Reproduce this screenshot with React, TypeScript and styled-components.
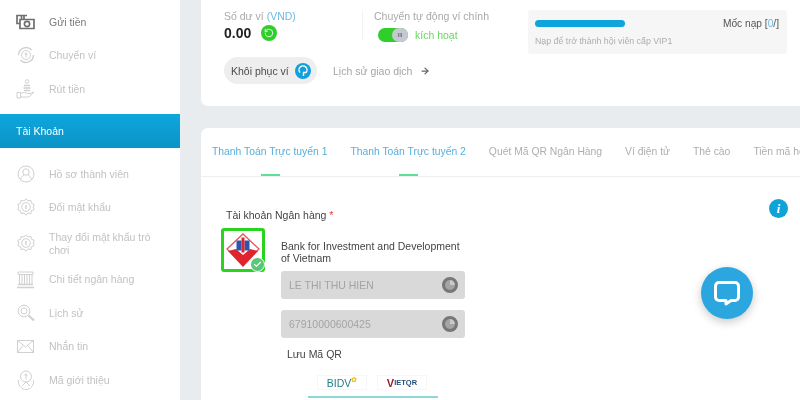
import React from 'react';
import styled, { createGlobalStyle } from 'styled-components';
import { ArrowRight, Check, RotateCcw } from 'lucide-react';

const GlobalStyle = createGlobalStyle`
  html, body {
    margin: 0;
    padding: 0;
    width: 800px;
    height: 400px;
    overflow: hidden;
    background: #e9ecef;
    font-family: 'Liberation Sans', Arial, sans-serif;
  }
`;

const Page = styled.div`
  position: relative;
  display: flex;
  width: 800px;
  height: 400px;
  overflow: hidden;
  background: #e9ecef;
  filter: blur(0.5px);
`;

const Sidebar = styled.aside`
  display: flex;
  flex-direction: column;
  flex: 0 0 180px;
  padding-top: 5px;
  background: #fff;
`;

const NavItem = styled.div<{ $tall?: boolean }>`
  display: flex;
  align-items: center;
  flex: 0 0 ${(p) => (p.$tall ? 38.5 : 33.6)}px;
  padding-left: 16px;
  gap: 14px;
  font-size: 10.5px;
  line-height: 13px;
`;

const NavIcon = styled.span<{ $dark?: boolean }>`
  display: flex;
  flex: 0 0 19px;
  justify-content: center;
  color: ${(p) => (p.$dark ? '#6f6f6f' : '#d0d0d0')};
`;

const NavLabel = styled.span<{ $dark?: boolean }>`
  width: 108px;
  padding-top: 1px;
  color: ${(p) => (p.$dark ? '#7a7a7a' : '#c2c2c2')};
`;

const SectionBand = styled.div`
  display: flex;
  align-items: center;
  height: 34px;
  margin: 8px 0 9px;
  padding-left: 16px;
  background: linear-gradient(#0ea7dd, #0b93c6);
  color: #fff;
  font-size: 10.5px;
`;

const Main = styled.main`
  display: flex;
  flex: 1;
  flex-direction: column;
  min-width: 0;
  padding-left: 21px;
`;

const WalletCard = styled.section`
  display: flex;
  flex: 0 0 106px;
  box-sizing: border-box;
  padding: 10px 13px 0 23px;
  background: #fff;
  border-bottom-left-radius: 7px;
`;

const WalletLeft = styled.div`
  display: flex;
  flex-direction: column;
  width: 304px;
`;

const WalletRow = styled.div`
  display: flex;
`;

const BalanceBlock = styled.div`
  width: 138px;
  height: 30px;
  border-right: 1px solid #f3f3f3;
`;

const SmallLabel = styled.div`
  color: #a9a9a9;
  font-size: 10.5px;
  line-height: 12px;
`;

const Accent = styled.span`
  color: #6db9e4;
`;

const BalanceValue = styled.div`
  display: flex;
  align-items: center;
  gap: 10px;
  margin-top: 3px;
  color: #222;
  font-size: 14px;
  font-weight: 700;
  line-height: 16px;
`;

const RoundIcon = styled.span<{ $color: string }>`
  display: inline-flex;
  align-items: center;
  justify-content: center;
  width: 16px;
  height: 16px;
  border-radius: 50%;
  background: ${(p) => p.$color};
  color: #fff;
`;

const AutoBlock = styled.div`
  padding-left: 11px;
`;

const ToggleRow = styled.div`
  display: flex;
  align-items: center;
  gap: 7px;
  margin: 6px 0 0 4px;
  color: #69d65f;
  font-size: 10.5px;
`;

const Toggle = styled.span`
  display: flex;
  justify-content: flex-end;
  width: 30px;
  height: 14px;
  border-radius: 7px;
  background: #2fce2b;
`;

const ToggleKnob = styled.span`
  display: flex;
  align-items: center;
  justify-content: center;
  width: 16px;
  height: 14px;
  border-radius: 7px;
  background: #c4c8d2;
  color: #777;
  font-size: 6px;
  font-weight: 700;
`;

const ActionRow = styled.div`
  display: flex;
  align-items: center;
  gap: 16px;
  margin-top: 15px;
`;

const RestorePill = styled.div`
  display: flex;
  align-items: center;
  justify-content: space-between;
  box-sizing: border-box;
  width: 93px;
  height: 27px;
  padding: 0 6px 0 7px;
  border-radius: 14px;
  background: #eeeeee;
  color: #4c4c4c;
  font-size: 10.5px;
`;

const HistoryLink = styled.div`
  display: flex;
  align-items: center;
  gap: 8px;
  color: #a5a5a5;
  font-size: 10.5px;
`;

const VipBox = styled.div`
  display: flex;
  flex-direction: column;
  box-sizing: border-box;
  width: 259px;
  height: 44px;
  padding: 10px 8px 0 7px;
  border-radius: 3px;
  background: #f6f6f6;
`;

const VipTop = styled.div`
  display: flex;
  align-items: center;
  justify-content: space-between;
  height: 7px;
  color: #555;
  font-size: 10.2px;
`;

const ProgressBar = styled.div`
  width: 90px;
  height: 7px;
  border-radius: 4px;
  background: #0ea5dc;
`;

const VipNote = styled.div`
  margin-top: 9px;
  color: #adadad;
  font-size: 8.8px;
  line-height: 11px;
`;

const PaymentCard = styled.section`
  position: relative;
  flex: 1;
  margin-top: 22px;
  background: #fff;
  border-top-left-radius: 7px;
`;

const TabBar = styled.nav`
  display: flex;
  gap: 23px;
  height: 48px;
  padding-left: 11px;
  overflow: hidden;
  border-bottom: 1px solid #eeeeee;
`;

const Tab = styled.div<{ $active?: boolean }>`
  position: relative;
  flex: none;
  padding-top: 17px;
  color: ${(p) => (p.$active ? '#58aedc' : '#aeaeae')};
  font-size: 10.35px;
  line-height: 13px;
  white-space: nowrap;

  &::after {
    content: '';
    display: ${(p) => (p.$active ? 'block' : 'none')};
    position: absolute;
    left: 49px;
    bottom: 0;
    width: 19px;
    height: 2px;
    background: #5fe09a;
  }
`;

const InfoBadge = styled.span`
  position: absolute;
  top: 71px;
  right: 12px;
  display: flex;
  align-items: center;
  justify-content: center;
  width: 19px;
  height: 19px;
  border-radius: 50%;
  background: #10a3d8;
  color: #fff;
  font-family: 'Liberation Serif', serif;
  font-size: 13px;
  font-style: italic;
  font-weight: 700;
`;

const Form = styled.div`
  display: flex;
  flex-direction: column;
  padding: 32px 0 0 20px;
`;

const FieldLabel = styled.div`
  margin-left: 5px;
  color: #444;
  font-size: 10.5px;
  line-height: 13px;
`;

const Required = styled.span`
  color: #e0443e;
`;

const BankRow = styled.div`
  display: flex;
  gap: 16px;
  margin-top: 6px;
`;

const BankTile = styled.div`
  position: relative;
  display: flex;
  align-items: center;
  justify-content: center;
  box-sizing: border-box;
  flex: none;
  width: 44px;
  height: 44px;
  border: 3px solid #2bd321;
  border-radius: 3px;
  background: #fff;
`;

const BankCheck = styled.span`
  position: absolute;
  right: -3px;
  bottom: -3px;
  display: flex;
  align-items: center;
  justify-content: center;
  box-sizing: border-box;
  width: 15px;
  height: 15px;
  border: 1.5px solid #fff;
  border-radius: 50%;
  background: #58c878;
  color: #fff;
`;

const BankDetails = styled.div`
  display: flex;
  flex-direction: column;
  width: 184px;
`;

const BankName = styled.div`
  margin: 12px 0 7px;
  color: #444;
  font-size: 10.5px;
  line-height: 12px;
`;

const GreyInput = styled.div`
  display: flex;
  align-items: center;
  justify-content: space-between;
  box-sizing: border-box;
  height: 28px;
  margin-bottom: 11px;
  padding: 0 7px 0 8px;
  border-radius: 3px;
  background: #d9d9d9;
  color: #a3a3a3;
  font-size: 10.5px;
`;

const CopyDot = styled.span`
  box-sizing: border-box;
  width: 16px;
  height: 16px;
  border: 3px solid #777;
  border-radius: 50%;
  background: conic-gradient(#c9c9c9 0 90deg, #a5a5a5 90deg 360deg);
`;

const QrTitle = styled.div`
  margin: -1px 0 15px 6px;
  color: #444;
  font-size: 10.5px;
  line-height: 12px;
`;

const QrLogos = styled.div`
  display: flex;
  gap: 10px;
  margin-left: 36px;
`;

const QrLogo = styled.div`
  display: flex;
  align-items: center;
  justify-content: center;
  box-sizing: border-box;
  width: 50px;
  height: 15px;
  border: 1px solid #f7f7f7;
  font-size: 10px;
  font-weight: 700;
`;

const BidvText = styled.span`
  color: #1d7f86;
  font-weight: 400;
  font-size: 10.5px;
`;

const BidvStar = styled.span`
  color: #e8c533;
  font-size: 7px;
  margin-top: -5px;
`;

const VietText = styled.span`
  color: #9c1c2c;
  font-size: 11px;
`;

const QrText = styled.span`
  color: #1f4f7a;
  font-size: 7.5px;
`;

const QrFrame = styled.div`
  width: 130px;
  height: 2px;
  margin: 6px 0 0 27px;
  background: #8fd6d6;
`;

const ChatButton = styled.div`
  position: absolute;
  left: 701px;
  top: 267px;
  display: flex;
  align-items: center;
  justify-content: center;
  width: 52px;
  height: 52px;
  border-radius: 50%;
  background: #2ba6df;
  box-shadow: 0 3px 10px rgba(0, 0, 0, 0.22);
`;

// Menu icons are drawn by hand, the packages have nothing close to these.
const CashIcon = () => (
  <svg width="19" height="16" viewBox="0 0 19 16" fill="none" stroke="currentColor" strokeWidth="1.7">
    <path d="M11 1.500H1v8h3" />
    <path d="M4 5.500h14v9H4z" fill="#fff" />
    <path d="M5.500 1.500v4M8 1.500v4" />
    <circle cx="11" cy="10" r="2.600" />
  </svg>
);

const WalletSwapIcon = () => (
  <svg width="18" height="18" viewBox="0 0 18 18" fill="none" stroke="currentColor" strokeWidth="1">
    <path d="M1.500 9a7.500 7.500 0 0 1 13-5M16.500 9a7.500 7.500 0 0 1-13 5" strokeWidth="1.400" />
    <circle cx="9" cy="9" r="4.500" />
    <path d="M9 6.500v5M7.500 8h3" />
  </svg>
);

const WithdrawIcon = () => (
  <svg width="19" height="20" viewBox="0 0 19 20" fill="none" stroke="currentColor" strokeWidth="1">
    <circle cx="11" cy="2.500" r="1.800" />
    <path d="M8 6.500h6M7.500 9h7M8 11.500h6" strokeWidth="1.300" />
    <path d="M1 13.500h3.500v5.500H1zM4.500 14.500c3-1.500 5-1 7 0h2.500l4-1.500-5 5H4.500" />
  </svg>
);

const UserRingIcon = () => (
  <svg width="18" height="18" viewBox="0 0 18 18" fill="none" stroke="currentColor" strokeWidth="1">
    <circle cx="9" cy="9" r="8" />
    <circle cx="9" cy="7" r="3.200" />
    <path d="M3.500 14.500c.5-2.500 2.500-4 3.500-4.500M14.500 14.500c-.5-2.500-2.500-4-3.500-4.500" />
  </svg>
);

const GearIcon = () => (
  <svg width="18" height="18" viewBox="0 0 18 18" fill="none" stroke="currentColor" strokeWidth="1">
    <path d="M9 .800l2 2.200 2.900-.6.600 2.900 2.700 1-1 2.700 1 2.700-2.700 1-.6 2.900-2.900-.6-2 2.200-2-2.200-2.900.6-.6-2.900-2.700-1 1-2.700-1-2.700 2.700-1 .6-2.900 2.900.6z" />
    <circle cx="9" cy="9" r="4.300" />
    <path d="M9 7v4" strokeWidth="1.400" />
  </svg>
);

const BankIcon = () => (
  <svg width="19" height="19" viewBox="0 0 19 19" fill="none" stroke="currentColor" strokeWidth="1">
    <path d="M2 2h15v2.500H2z" />
    <path d="M3.500 4.500v10M6 4.500v10M8.500 4.500v10M11 4.500v10M13.500 4.500v10M16 4.500v10" />
    <path d="M2 14.500h15M1 17.500h17" strokeWidth="1.400" />
  </svg>
);

const ZoomIcon = () => (
  <svg width="18" height="18" viewBox="0 0 18 18" fill="none" stroke="currentColor">
    <circle cx="7" cy="7" r="5.800" strokeWidth="1" />
    <circle cx="7" cy="7" r="3" strokeWidth="1" />
    <path d="M11.500 11.500 17 16.500" strokeWidth="2.200" />
  </svg>
);

const EnvelopeIcon = () => (
  <svg width="17" height="13" viewBox="0 0 17 13" fill="none" stroke="currentColor" strokeWidth="1">
    <rect x=".500" y=".500" width="16" height="12" />
    <path d="M.500 .500 8.500 7l8-6.500M.500 12.500 6 5.500M16.500 12.500 11 5.500" />
  </svg>
);

const GiftCoinIcon = () => (
  <svg width="18" height="20" viewBox="0 0 18 20" fill="none" stroke="currentColor" strokeWidth="1">
    <circle cx="9" cy="6.500" r="5.500" />
    <path d="M9 3.500v6M7.400 5h3" />
    <path d="M1.500 10c-1 5 3 9.500 7.500 9.500s8.500-4.500 7.500-9.500M5 16l4-4 4 4" />
  </svg>
);

const BankLogo = () => (
  <svg width="38" height="38" viewBox="0 0 38 38">
    <path d="M19 3 35 18 19 33 3 18Z" fill="#fff" stroke="#e8545c" strokeWidth="1.300" />
    <path d="M4 20 12 18 19 24 26 18 34 20 19 36Z" fill="#e0242e" />
    <rect x="12.500" y="9.500" width="5" height="10" fill="#2a56b0" />
    <rect x="20.500" y="9.500" width="5" height="10" fill="#2a56b0" />
    <rect x="17.500" y="6.500" width="3" height="15" fill="#e0242e" />
  </svg>
);

const ChatIcon = () => (
  <svg width="28" height="26" viewBox="0 0 28 26" fill="none">
    <path
      d="M6 2.500h16a3.500 3.500 0 0 1 3.500 3.500v11a3.500 3.500 0 0 1-3.500 3.500h-4l-5 3.500v-3.500H6A3.500 3.500 0 0 1 2.500 17V6A3.500 3.500 0 0 1 6 2.500Z"
      stroke="#fff"
      strokeWidth="3"
      strokeLinejoin="round"
    />
  </svg>
);

const RestoreIcon = () => (
  <svg width="10" height="12" viewBox="0 0 10 12" fill="none" stroke="#fff" strokeWidth="1.400">
    <path d="M2 7.500A4 4 0 1 1 8 7.500H5.500V11" />
  </svg>
);

const App = () => {
  return (
    <Page>
      <GlobalStyle />
      <Sidebar>
        <NavItem>
          <NavIcon $dark>
            <CashIcon />
          </NavIcon>
          <NavLabel $dark>Gửi tiền</NavLabel>
        </NavItem>
        <NavItem>
          <NavIcon>
            <WalletSwapIcon />
          </NavIcon>
          <NavLabel>Chuyển ví</NavLabel>
        </NavItem>
        <NavItem>
          <NavIcon>
            <WithdrawIcon />
          </NavIcon>
          <NavLabel>Rút tiền</NavLabel>
        </NavItem>
        <SectionBand>Tài Khoản</SectionBand>
        <NavItem>
          <NavIcon>
            <UserRingIcon />
          </NavIcon>
          <NavLabel>Hồ sơ thành viên</NavLabel>
        </NavItem>
        <NavItem>
          <NavIcon>
            <GearIcon />
          </NavIcon>
          <NavLabel>Đổi mật khẩu</NavLabel>
        </NavItem>
        <NavItem $tall>
          <NavIcon>
            <GearIcon />
          </NavIcon>
          <NavLabel>Thay đổi mật khẩu trò chơi</NavLabel>
        </NavItem>
        <NavItem>
          <NavIcon>
            <BankIcon />
          </NavIcon>
          <NavLabel>Chi tiết ngân hàng</NavLabel>
        </NavItem>
        <NavItem>
          <NavIcon>
            <ZoomIcon />
          </NavIcon>
          <NavLabel>Lịch sử</NavLabel>
        </NavItem>
        <NavItem>
          <NavIcon>
            <EnvelopeIcon />
          </NavIcon>
          <NavLabel>Nhắn tin</NavLabel>
        </NavItem>
        <NavItem>
          <NavIcon>
            <GiftCoinIcon />
          </NavIcon>
          <NavLabel>Mã giới thiệu</NavLabel>
        </NavItem>
      </Sidebar>
      <Main>
        <WalletCard>
          <WalletLeft>
            <WalletRow>
              <BalanceBlock>
                <SmallLabel>
                  Số dư ví <Accent>(VND)</Accent>
                </SmallLabel>
                <BalanceValue>
                  0.00
                  <RoundIcon $color="#2fce2b">
                    <RotateCcw size={10} strokeWidth={2} />
                  </RoundIcon>
                </BalanceValue>
              </BalanceBlock>
              <AutoBlock>
                <SmallLabel>Chuyển tự động ví chính</SmallLabel>
                <ToggleRow>
                  <Toggle>
                    <ToggleKnob>III</ToggleKnob>
                  </Toggle>
                  kích hoạt
                </ToggleRow>
              </AutoBlock>
            </WalletRow>
            <ActionRow>
              <RestorePill>
                Khôi phục ví
                <RoundIcon $color="#12a0dc">
                  <RestoreIcon />
                </RoundIcon>
              </RestorePill>
              <HistoryLink>
                Lịch sử giao dịch
                <ArrowRight size={10} strokeWidth={3} color="#666" />
              </HistoryLink>
            </ActionRow>
          </WalletLeft>
          <VipBox>
            <VipTop>
              <ProgressBar />
              <span>
                Mốc nạp [<Accent>0</Accent>/]
              </span>
            </VipTop>
            <VipNote>Nạp để trở thành hội viên cấp VIP1</VipNote>
          </VipBox>
        </WalletCard>
        <PaymentCard>
          <TabBar>
            <Tab $active>Thanh Toán Trực tuyến 1</Tab>
            <Tab $active>Thanh Toán Trực tuyến 2</Tab>
            <Tab>Quét Mã QR Ngân Hàng</Tab>
            <Tab>Ví điện tử</Tab>
            <Tab>Thẻ cào</Tab>
            <Tab>Tiền mã hóa</Tab>
          </TabBar>
          <InfoBadge>i</InfoBadge>
          <Form>
            <FieldLabel>
              Tài khoản Ngân hàng <Required>*</Required>
            </FieldLabel>
            <BankRow>
              <BankTile>
                <BankLogo />
                <BankCheck>
                  <Check size={9} strokeWidth={3} />
                </BankCheck>
              </BankTile>
              <BankDetails>
                <BankName>Bank for Investment and Development of Vietnam</BankName>
                <GreyInput>
                  LE THI THU HIEN
                  <CopyDot />
                </GreyInput>
                <GreyInput>
                  67910000600425
                  <CopyDot />
                </GreyInput>
                <QrTitle>Lưu Mã QR</QrTitle>
                <QrLogos>
                  <QrLogo>
                    <BidvText>BIDV</BidvText>
                    <BidvStar>✿</BidvStar>
                  </QrLogo>
                  <QrLogo>
                    <VietText>V</VietText>
                    <QrText>IETQR</QrText>
                  </QrLogo>
                </QrLogos>
                <QrFrame />
              </BankDetails>
            </BankRow>
          </Form>
        </PaymentCard>
      </Main>
      <ChatButton>
        <ChatIcon />
      </ChatButton>
    </Page>
  );
};

export default App;
